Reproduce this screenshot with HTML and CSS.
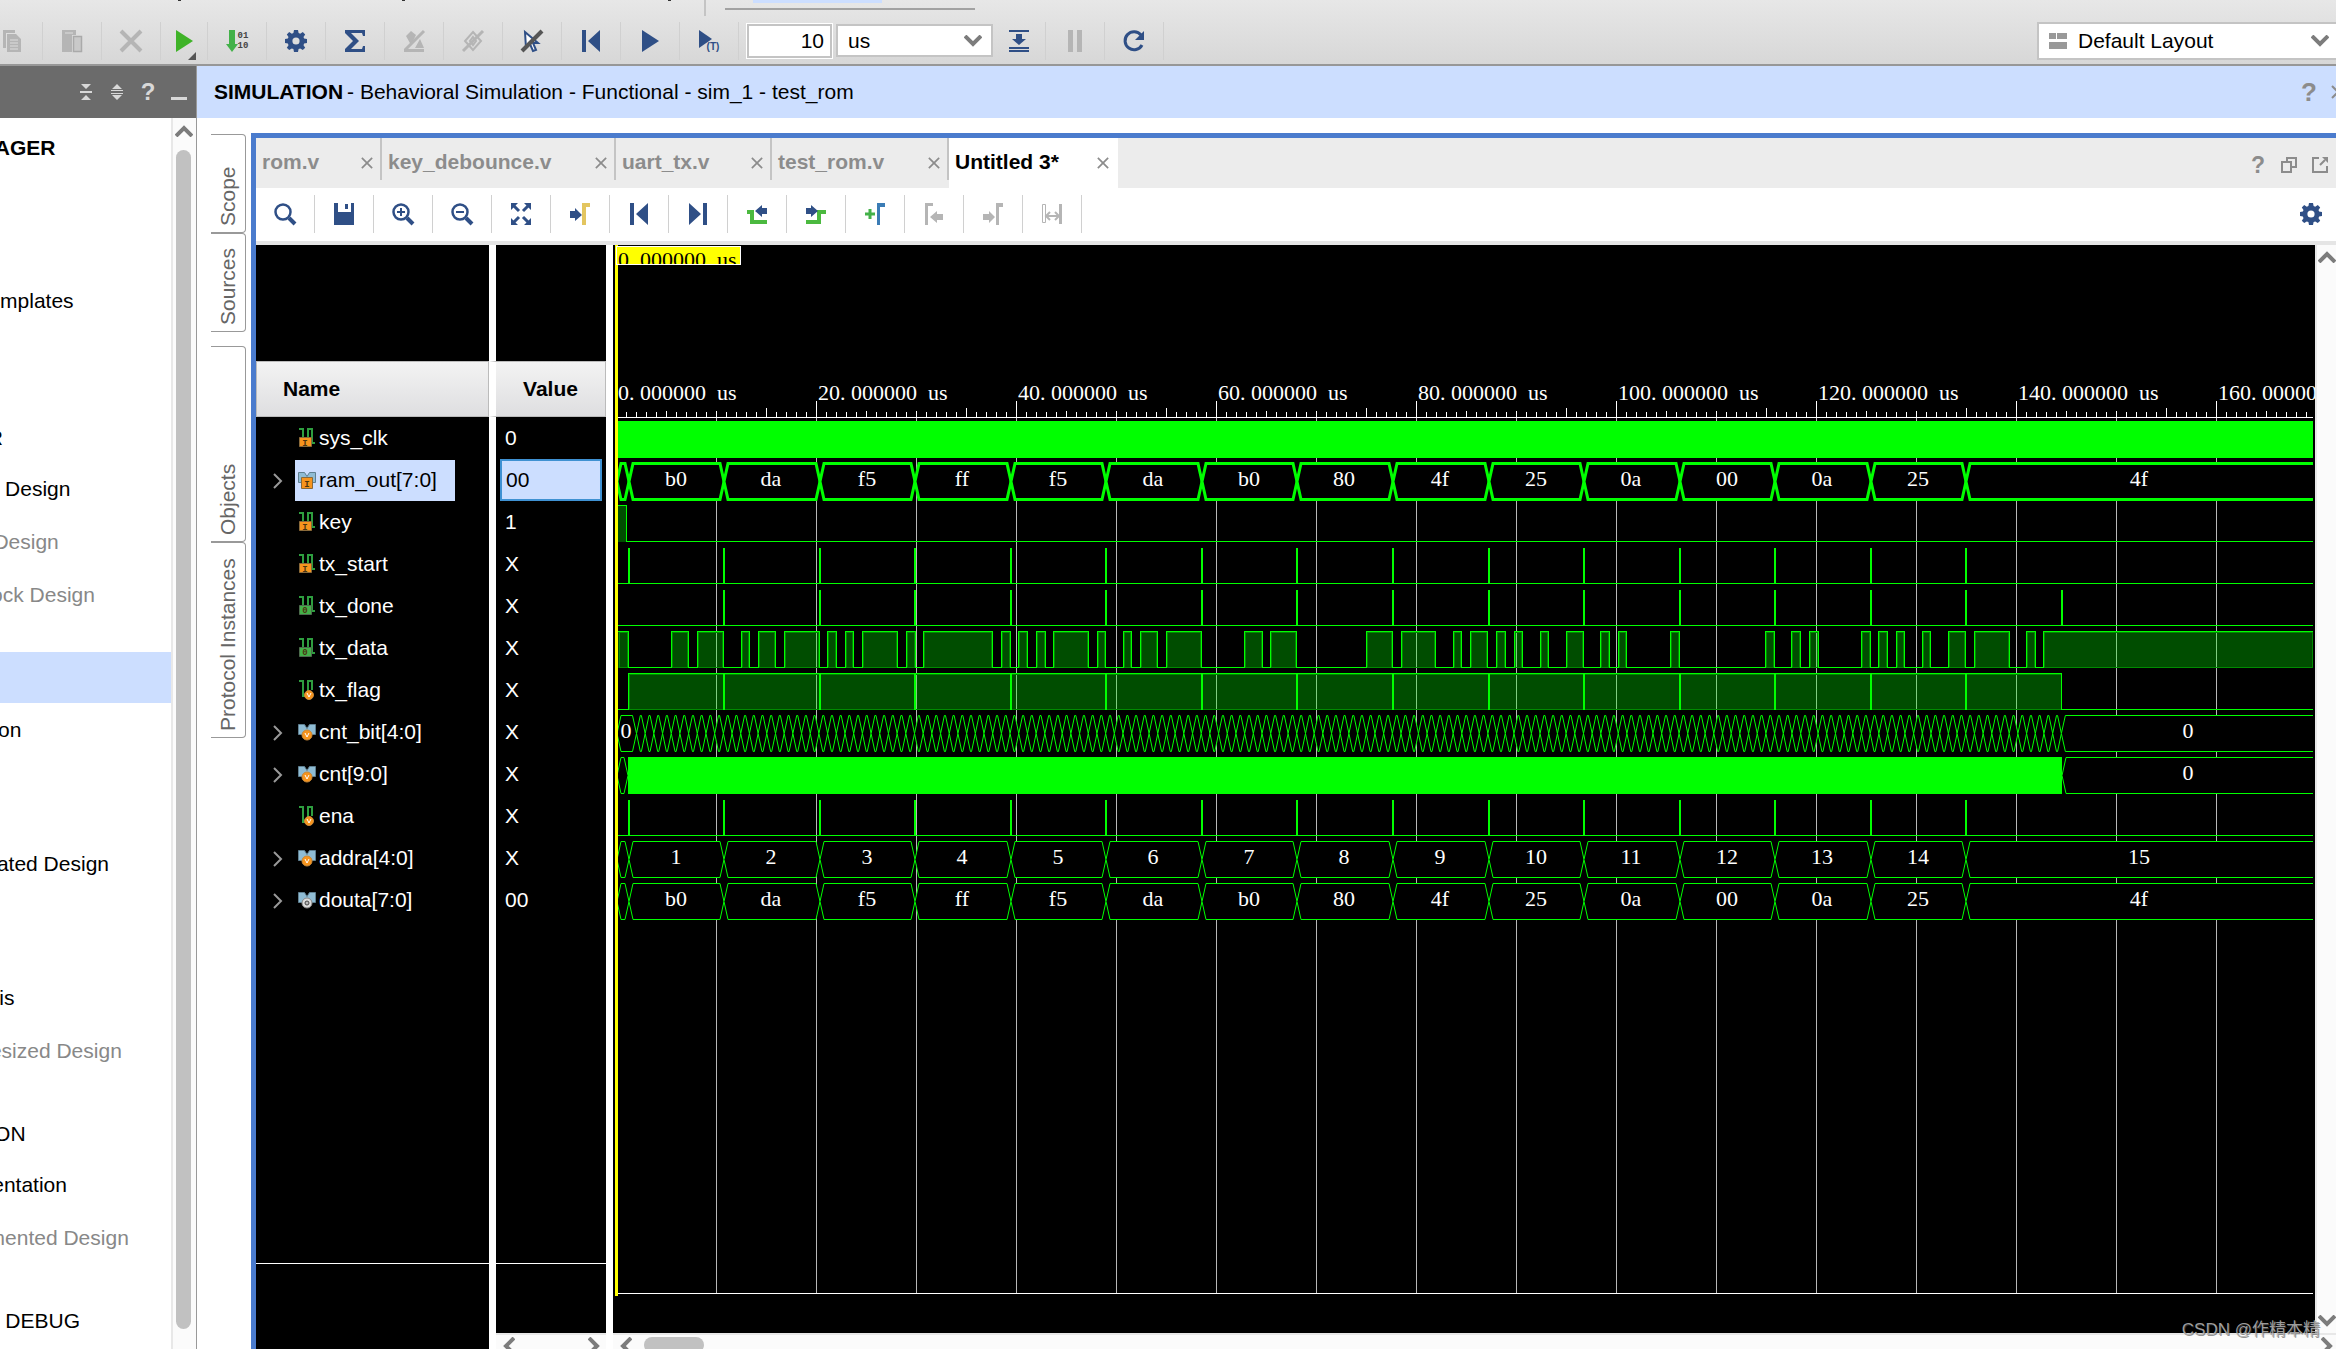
FILE: index.html
```html
<!DOCTYPE html>
<html lang="en">
<head>
<meta charset="utf-8">
<title>Behavioral Simulation - test_rom</title>
<link rel="stylesheet" href="styles.css">
</head>
<body>
<svg class="defs" aria-hidden="true">
  <symbol id="i-gear" viewBox="0 0 22 22"><path fill-rule="evenodd" fill="currentColor" d="M9 0h4l.6 3 1.6.7L17.8 2l2.4 2.4-1.7 2.5.6 1.6 2.9.5v4l-2.9.6-.6 1.600 1.700 2.500-2.400 2.400-2.600-1.700-1.600.6-.6 3H9l-.6-3-1.600-.6-2.600 1.700-2.400-2.400 1.700-2.500-.6-1.600L0 13V9l2.900-.5.6-1.600-1.700-2.500L4.200 2l2.600 1.700L8.400 3zM11 7.400a3.600 3.600 0 1 0 0 7.200 3.600 3.600 0 0 0 0-7.200z"/></symbol>
  <symbol id="i-prev" viewBox="0 0 22 22"><path fill="currentColor" d="M2 0h4v22H2zM20 0v22L8 11z"/></symbol>
  <symbol id="i-next" viewBox="0 0 22 22"><path fill="currentColor" d="M16 0h4v22h-4zM2 0v22l12-11z"/></symbol>
  <symbol id="i-play" viewBox="0 0 22 22"><path fill="currentColor" d="M3 0l17 11L3 22z"/></symbol>
  <symbol id="i-x" viewBox="0 0 14 14"><path fill="none" stroke="currentColor" stroke-width="2" d="M1 1l12 12M13 1L1 13"/></symbol>
  <symbol id="i-up" viewBox="0 0 18 12"><path fill="none" stroke="currentColor" stroke-width="4" d="M1 11l8-8 8 8"/></symbol>
  <symbol id="i-down" viewBox="0 0 18 12"><path fill="none" stroke="currentColor" stroke-width="4" d="M1 1l8 8 8-8"/></symbol>
  <symbol id="i-left" viewBox="0 0 12 18"><path fill="none" stroke="currentColor" stroke-width="4" d="M11 1L3 9l8 8"/></symbol>
  <symbol id="i-right" viewBox="0 0 12 18"><path fill="none" stroke="currentColor" stroke-width="4" d="M1 1l8 8-8 8"/></symbol>
  <symbol id="i-more" viewBox="0 0 10 16"><path fill="none" stroke="currentColor" stroke-width="2" d="M1 1l7 7-7 7"/></symbol>
  <symbol id="s-in" viewBox="0 0 18 20"><path fill="none" stroke="#2e9e3f" stroke-width="2" d="M1 1h4v9M10 9V1h4v14h3"/><path fill="#f7941d" stroke="#8a6a3a" d="M1.500 9.500h12v9h-12z"/><text x="7" y="18" class="badge">I</text></symbol>
  <symbol id="s-out" viewBox="0 0 18 20"><path fill="none" stroke="#2e9e3f" stroke-width="2" d="M1 1h4v9M10 9V1h4v14h3"/><path fill="#43b149" stroke="#4c6b4c" d="M1.500 9.500h12v9h-12z"/><text x="7" y="17" class="badge">0</text></symbol>
  <symbol id="s-var" viewBox="0 0 18 20"><path fill="none" stroke="#2e9e3f" stroke-width="2" d="M1 1h4v15h5V1h4v9"/><circle cx="11" cy="15" r="4.500" fill="#f7941d" stroke="#c98a3a"/><path fill="none" stroke="#fff" d="M9 13l2 4 2-4"/></symbol>
  <symbol id="s-bus-in" viewBox="0 0 18 20"><path fill="#8fbcd4" stroke="#5f7f90" d="M.5 2.500h6l2.500 4 2.500-4h6v10H14l-2-3H6l-2 3H.5z"/><path fill="#f7941d" stroke="#8a6a3a" d="M3.500 7.500h11v11h-11z"/><text x="9" y="17" class="badge">I</text></symbol>
  <symbol id="s-bus" viewBox="0 0 18 20"><path fill="#8fbcd4" stroke="#5f7f90" d="M.5 2.500h6l2.500 4 2.500-4h6v10H14l-2-3H6l-2 3H.5z"/><circle cx="9" cy="13" r="5" fill="#f7941d" stroke="#c98a3a"/><path fill="none" stroke="#fff" d="M7 11l2 4 2-4"/></symbol>
  <symbol id="s-bus-net" viewBox="0 0 18 20"><path fill="#8fbcd4" stroke="#5f7f90" d="M.5 2.500h6l2.500 4 2.500-4h6v10H14l-2-3H6l-2 3H.5z"/><circle cx="9" cy="13" r="5" fill="#ddd" stroke="#888"/><circle cx="9" cy="13" r="2" fill="#bbb" stroke="#444"/></symbol>
</svg>

<header class="top">
  <svg class="strip" aria-hidden="true"><g fill="#333"><rect x="178" width="3" height="1"/><rect x="402" width="3" height="1"/><rect x="668" width="3" height="1"/></g><rect x="704" width="2" height="16" fill="#c4c4c4"/><rect x="753" width="129" height="3" fill="#ccdeff"/><rect x="725" y="8" width="250" height="2" fill="#a2a2a2"/></svg>
  <div class="toolbar">
    <button class="tool first off" aria-label="Copy"><svg viewBox="0 0 26 22"><path fill="currentColor" d="M3 0h12v3H6v15H3zM7 4h9l5 5v13H7z"/><path stroke="#ddd" stroke-width="1" d="M10 10h8M10 13h8M10 16h8M10 19h8"/></svg></button>
    <button class="tool off" aria-label="Paste"><svg viewBox="0 0 22 22"><path fill="currentColor" d="M1 0h14v5h-4v17H1z"/><path stroke="#ddd" d="M4 3h8"/><path fill="#c9c9c9" stroke="#aaa" stroke-width="1.500" d="M12.500 6.500h8v15h-8z"/></svg></button>
    <button class="tool off" aria-label="Delete"><svg viewBox="0 0 22 22"><path fill="none" stroke="currentColor" stroke-width="4" d="M1 1l20 20M21 1L1 21"/></svg></button>
    <button class="tool run" aria-label="Run"><svg viewBox="0 0 22 22"><use href="#i-play"/></svg><i class="corner"></i></button>
    <button class="tool" aria-label="Program"><svg viewBox="0 0 22 22"><path fill="#43b149" d="M3 0h6v14h3L6 22 0 14h3z"/><text x="17" y="8" class="bits">01</text><text x="17" y="18" class="bits">10</text></svg></button>
    <button class="tool" aria-label="Settings"><svg viewBox="0 0 22 22"><use href="#i-gear"/></svg></button>
    <button class="tool" aria-label="Report"><svg viewBox="0 0 22 22"><path fill="currentColor" d="M1 0h20v6h-2l-1-3H7l8 8-8 8h11l1-3h2v6H1v-3l8-8-8-8z"/></svg></button>
    <button class="tool off" aria-label="Breakpoints"><svg viewBox="0 0 22 22"><path fill="currentColor" d="M3 6l5-5 5 4-5 10zM1 19h20v3H1zM12 18l5-9 4 9z"/><path stroke="currentColor" stroke-width="3" d="M21 1L2 20"/></svg></button>
    <button class="tool off" aria-label="Scope off"><svg viewBox="0 0 22 22"><path fill="none" stroke="currentColor" stroke-width="2" d="M11 2l8 9-8 9-8-9zM11 7l3 4-3 4-3-4z"/><path stroke="currentColor" stroke-width="3" d="M21 1L1 21"/></svg></button>
    <button class="tool" aria-label="Unselect"><svg viewBox="0 0 22 22"><path fill="#fff" stroke="currentColor" stroke-width="2" d="M4 2l13 11h-5l3 7-3 1-3-7-4 4z"/><path stroke="#555" stroke-width="4" d="M21 1L1 21"/></svg></button>
    <button class="tool" aria-label="Restart"><svg viewBox="0 0 22 22"><use href="#i-prev"/></svg></button>
    <button class="tool" aria-label="Run all"><svg viewBox="0 0 22 22"><use href="#i-play"/></svg></button>
    <button class="tool" aria-label="Run for time"><svg viewBox="0 0 22 22"><path fill="currentColor" d="M1 0l13 9L1 18z"/><text x="15" y="20" class="tee">(T)</text></svg></button>
    <input class="time" aria-label="Run time" value="10">
    <span class="pick unit"><select aria-label="Time unit"><option>us</option></select><svg viewBox="0 0 18 12"><use href="#i-down"/></svg></span>
    <button class="tool step" aria-label="Step"><svg viewBox="0 0 22 22"><path fill="currentColor" d="M1 0h20v2H1zM8 4h6v5h4l-7 6-7-6h4zM1 17h20v2H1zM1 20h20v2H1z"/></svg></button>
    <button class="tool off" aria-label="Pause"><svg viewBox="0 0 22 22"><path fill="currentColor" d="M4 0h5v22H4zM13 0h5v22h-5z"/></svg></button>
    <button class="tool" aria-label="Relaunch"><svg viewBox="0 0 22 22"><path fill="none" stroke="currentColor" stroke-width="3" d="M18 5a9 9 0 1 0 1 10"/><path fill="currentColor" d="M21 1v9h-9z"/></svg></button>
    <span class="pick layout"><svg class="grid-icon" viewBox="0 0 18 16"><path fill="#999" d="M0 0h7v6H0zM8 0h10v6H8zM0 9h18v7H0z"/></svg><select aria-label="Layout"><option>Default Layout</option></select><svg viewBox="0 0 18 12"><use href="#i-down"/></svg></span>
  </div>
</header>

<div class="work">
  <aside class="nav">
    <div class="nav-head">
      <button aria-label="Collapse all"><svg viewBox="0 0 16 16"><path fill="currentColor" d="M3 0h10L8 5zM2 7h12v2H2zM3 16h10l-5-5z"/></svg></button>
      <button aria-label="Expand all"><svg viewBox="0 0 16 16"><path fill="currentColor" d="M3 5h10L8 0zM2 6h12v1H2zM2 9h12v1H2zM3 11h10l-5 5z"/></svg></button>
      <button aria-label="Help">?</button>
      <button aria-label="Minimize"><svg viewBox="0 0 16 16"><path fill="currentColor" d="M0 13h16v3H0z"/></svg></button>
    </div>
    <div class="nav-body">
      <ul class="flow">
        <li class="group title">PROJECT MANAGER</li>
        <li class="after-hidden">Language Templates</li>
        <li class="group wide">IP INTEGRATOR</li>
        <li>Create Block Design</li>
        <li class="off">Open Block Design</li>
        <li class="off">Generate Block Design</li>
        <li class="group chosen">SIMULATION</li>
        <li>Run Simulation</li>
        <li class="after-head">Open Elaborated Design</li>
        <li class="after-head">Run Synthesis</li>
        <li class="off">Open Synthesized Design</li>
        <li class="group next">IMPLEMENTATION</li>
        <li>Run Implementation</li>
        <li class="off">Open Implemented Design</li>
        <li class="group next">PROGRAM AND DEBUG</li>
      </ul>
      <div class="vbar"><svg viewBox="0 0 18 12"><use href="#i-up"/></svg><i class="thumb"></i></div>
    </div>
  </aside>

  <main class="sim">
    <div class="sim-head"><h1>SIMULATION</h1><p>- Behavioral Simulation - Functional - sim_1 - test_rom</p>
      <button class="ask" aria-label="Help">?</button><button class="shut" aria-label="Close"><svg viewBox="0 0 14 14"><use href="#i-x"/></svg></button></div>
    <div class="sim-body">
      <nav class="side">
        <a href="#scope" class="short">Scope</a><a href="#sources" class="short">Sources</a>
        <a href="#objects" class="tall apart">Objects</a><a href="#protocol" class="tall">Protocol Instances</a>
      </nav>
      <section class="pane">
        <div class="tabs">
          <div class="tab t1"><a href="#rom">rom.v</a><button aria-label="Close rom.v"><svg viewBox="0 0 14 14"><use href="#i-x"/></svg></button></div>
          <div class="tab t2"><a href="#key">key_debounce.v</a><button aria-label="Close key_debounce.v"><svg viewBox="0 0 14 14"><use href="#i-x"/></svg></button></div>
          <div class="tab t3"><a href="#uart">uart_tx.v</a><button aria-label="Close uart_tx.v"><svg viewBox="0 0 14 14"><use href="#i-x"/></svg></button></div>
          <div class="tab t4"><a href="#test">test_rom.v</a><button aria-label="Close test_rom.v"><svg viewBox="0 0 14 14"><use href="#i-x"/></svg></button></div>
          <div class="tab t5 active"><a href="#wave">Untitled 3*</a><button aria-label="Close Untitled 3"><svg viewBox="0 0 14 14"><use href="#i-x"/></svg></button></div>
          <div class="tab-tools">
            <button aria-label="Help">?</button>
            <button aria-label="Restore"><svg viewBox="0 0 16 16"><path fill="none" stroke="currentColor" stroke-width="2" d="M1 5h9v10H1zM6 5V1h9v9h-5"/></svg></button>
            <button aria-label="Float"><svg viewBox="0 0 16 16"><path fill="none" stroke="currentColor" stroke-width="2" d="M7 1H1v14h14V9M8 8l5-5"/><path fill="currentColor" d="M10 0h6v6z"/></svg></button>
          </div>
        </div>
        <div class="wave-tools">
          <button class="tool" aria-label="Search"><svg viewBox="0 0 22 22"><circle cx="9" cy="9" r="7.500" fill="none" stroke="currentColor" stroke-width="2.500"/><path stroke="currentColor" stroke-width="4" d="M15 15l6 6"/></svg></button>
          <button class="tool" aria-label="Save"><svg viewBox="0 0 22 22"><path fill="currentColor" fill-rule="evenodd" d="M1 0h4v9h13V0h3v22H1zM12 1h3v5h-3z"/></svg></button>
          <button class="tool" aria-label="Zoom in"><svg viewBox="0 0 22 22"><circle cx="9" cy="9" r="7.500" fill="none" stroke="currentColor" stroke-width="2.500"/><path stroke="currentColor" stroke-width="4" d="M15 15l6 6"/><path stroke="currentColor" stroke-width="2" d="M5 9h8M9 5v8"/></svg></button>
          <button class="tool" aria-label="Zoom out"><svg viewBox="0 0 22 22"><circle cx="9" cy="9" r="7.500" fill="none" stroke="currentColor" stroke-width="2.500"/><path stroke="currentColor" stroke-width="4" d="M15 15l6 6"/><path stroke="currentColor" stroke-width="2" d="M5 9h8"/></svg></button>
          <button class="tool" aria-label="Zoom fit"><svg viewBox="0 0 22 22"><path fill="currentColor" d="M1 0h7L1 7zM14 0h7v7zM1 15v7h7zM21 15v7h-7z"/><path stroke="currentColor" stroke-width="3" d="M3 2l6 6M19 2l-6 6M3 20l6-6M19 20l-6-6"/></svg></button>
          <button class="tool" aria-label="Go to cursor"><svg viewBox="0 0 22 22"><path fill="currentColor" d="M1 8h5V5l7 7-7 6v-3H1z"/><path fill="#e3c55f" d="M13 0h8v4h-4v18h-4z"/></svg></button>
          <button class="tool" aria-label="Go to start"><svg viewBox="0 0 22 22"><use href="#i-prev"/></svg></button>
          <button class="tool" aria-label="Go to end"><svg viewBox="0 0 22 22"><use href="#i-next"/></svg></button>
          <button class="tool" aria-label="Previous transition"><svg viewBox="0 0 22 22"><path fill="none" stroke="#4bb93f" stroke-width="4" d="M1 9h5v10h15"/><path fill="currentColor" d="M9 8l7-6v3h5v6h-5v3z"/></svg></button>
          <button class="tool" aria-label="Next transition"><svg viewBox="0 0 22 22"><path fill="none" stroke="#4bb93f" stroke-width="4" d="M1 19h13V9h7"/><path fill="currentColor" d="M13 8L6 2v3H1v6h5v3z"/></svg></button>
          <button class="tool" aria-label="Add marker"><svg viewBox="0 0 22 22"><path stroke="#43b149" stroke-width="3" d="M1 11h10M6 6v10"/><path fill="#3b7cb5" d="M13 0h8v4h-5v18h-3z"/></svg></button>
          <button class="tool off" aria-label="Previous marker"><svg viewBox="0 0 22 22"><path fill="currentColor" d="M2 0h8v3H5v19H2zM7 14l7-6v3h6v6h-6v3z"/></svg></button>
          <button class="tool off" aria-label="Next marker"><svg viewBox="0 0 22 22"><path fill="currentColor" d="M14 0h7v4h-4v18h-3zM13 14L7 8v3H1v6h6v3z"/></svg></button>
          <button class="tool off" aria-label="Swap cursors"><svg viewBox="0 0 22 22"><path fill="none" stroke="currentColor" d="M1.500 1.500h3v18h-3z"/><path fill="none" stroke="currentColor" stroke-width="2" d="M6 13h11M9 9l-4 4 4 4M14 9l4 4-4 4"/><path fill="currentColor" d="M18 1h3v20h-3z"/></svg></button>
          <button class="gear" aria-label="Wave settings"><svg viewBox="0 0 22 22"><use href="#i-gear"/></svg></button>
        </div>
        <div class="viewer">
          <div class="signals">
            <table>
              <thead><tr><th>Name</th><th>Value</th></tr></thead>
              <tbody>
                <tr><td><span class="sig"><svg class="kind"><use href="#s-in"/></svg>sys_clk</span></td><td>0</td></tr>
                <tr class="picked"><td><svg class="open"><use href="#i-more"/></svg><span class="sig"><svg class="kind"><use href="#s-bus-in"/></svg>ram_out[7:0]</span></td><td><span class="cell">00</span></td></tr>
                <tr><td><span class="sig"><svg class="kind"><use href="#s-in"/></svg>key</span></td><td>1</td></tr>
                <tr><td><span class="sig"><svg class="kind"><use href="#s-in"/></svg>tx_start</span></td><td>X</td></tr>
                <tr><td><span class="sig"><svg class="kind"><use href="#s-out"/></svg>tx_done</span></td><td>X</td></tr>
                <tr><td><span class="sig"><svg class="kind"><use href="#s-out"/></svg>tx_data</span></td><td>X</td></tr>
                <tr><td><span class="sig"><svg class="kind"><use href="#s-var"/></svg>tx_flag</span></td><td>X</td></tr>
                <tr><td><svg class="open"><use href="#i-more"/></svg><span class="sig"><svg class="kind"><use href="#s-bus"/></svg>cnt_bit[4:0]</span></td><td>X</td></tr>
                <tr><td><svg class="open"><use href="#i-more"/></svg><span class="sig"><svg class="kind"><use href="#s-bus"/></svg>cnt[9:0]</span></td><td>X</td></tr>
                <tr><td><span class="sig"><svg class="kind"><use href="#s-var"/></svg>ena</span></td><td>X</td></tr>
                <tr><td><svg class="open"><use href="#i-more"/></svg><span class="sig"><svg class="kind"><use href="#s-bus"/></svg>addra[4:0]</span></td><td>X</td></tr>
                <tr><td><svg class="open"><use href="#i-more"/></svg><span class="sig"><svg class="kind"><use href="#s-bus-net"/></svg>douta[7:0]</span></td><td>00</td></tr>
              </tbody>
            </table>
            <div class="rule"></div>
            <div class="hbar small"><svg viewBox="0 0 12 18"><use href="#i-left"/></svg><svg viewBox="0 0 12 18"><use href="#i-right"/></svg></div>
          </div>
          <div class="plot">
            <div class="canvas"><svg id="wave" role="img" aria-label="Waveform"></svg></div>
            <div class="hbar"><svg viewBox="0 0 12 18"><use href="#i-left"/></svg><i class="thumb"></i><svg class="end" viewBox="0 0 12 18"><use href="#i-right"/></svg></div>
          </div>
          <div class="vbar wide"><svg viewBox="0 0 18 12"><use href="#i-up"/></svg><svg class="low" viewBox="0 0 18 12"><use href="#i-down"/></svg></div>
        </div>
      </section>
    </div>
  </main>
</div>
<div class="mark">CSDN @作精本精</div>
<script src="wave.js"></script>
</body>
</html>
```

FILE: styles.css
```css
* { box-sizing: border-box; }
body {
  margin: 0;
  height: 100vh;
  display: flex;
  flex-direction: column;
  overflow: hidden;
  background: #fff;
  color: #000;
  font: 21px/24px "Liberation Sans", Arial, sans-serif;
}
button { border: 0; padding: 0; background: none; color: inherit; font: inherit; }
a { color: inherit; text-decoration: none; }
svg { display: block; flex: none; }
.defs { position: absolute; width: 0; height: 0; }
.badge { font: bold 9px "Liberation Mono", monospace; fill: #4a3510; text-anchor: middle; }
.bits { font: bold 9px "Liberation Mono", monospace; fill: #444; text-anchor: middle; }
.tee { font: bold 10px "Liberation Sans", Arial, sans-serif; fill: #2f4f86; text-anchor: middle; }

.top {
  flex: none;
  background: linear-gradient(#e7e7e7, #d7d7d7);
  border-bottom: 2px solid #979797;
}
.strip { width: 100%; height: 17px; }
.toolbar { display: flex; align-items: center; height: 47px; }
.tool {
  position: relative;
  flex: none;
  width: 59px;
  height: 38px;
  display: flex;
  align-items: center;
  justify-content: center;
  color: #2f4f86;
  border-right: 1px solid #d0d0d0;
}
.tool svg { width: 22px; height: 22px; overflow: visible; }
.tool.off { color: #b5b5b5; }
.tool.first { width: 43px; justify-content: flex-start; }
.tool.first svg { width: 26px; }
.tool.run { width: 47px; color: #3fb328; }
.tool.step { width: 53px; }
.corner {
  position: absolute;
  right: 11px;
  bottom: 0;
  border: 4px solid;
  border-color: transparent #555 #555 transparent;
}
.time {
  width: 85px;
  height: 34px;
  margin: 0 4px 0 8px;
  padding: 0 6px;
  border: 2px solid #c4c4c4;
  outline: 1px solid #fff;
  background: #fff;
  font: inherit;
  text-align: right;
}
.pick {
  display: flex;
  align-items: center;
  position: relative;
  flex: none;
  color: #7c7c7c;
  border: 2px solid #c4c4c4;
  background: #fff;
}
.pick select {
  appearance: none;
  width: 100%;
  height: 100%;
  border: 0;
  padding: 0 10px;
  background: none;
  color: #000;
  font: inherit;
}
.pick svg { position: absolute; right: 9px; width: 18px; height: 12px; }
.unit { width: 157px; height: 33px; }
.layout { width: 303px; height: 38px; margin: 0 -4px 0 auto; }
.layout select { padding-left: 39px; }
.layout .grid-icon { left: 10px; width: 18px; height: 16px; }

.work { flex: 1; min-height: 0; display: flex; }
.nav { flex: none; width: 197px; display: flex; flex-direction: column; border-right: 1px solid #999; }
.nav-head {
  flex: none;
  height: 52px;
  display: flex;
  align-items: center;
  justify-content: flex-end;
  gap: 15px;
  padding-right: 9px;
  background: #6b6b6b;
  color: #d8d8d8;
}
.nav-head button { width: 16px; font-size: 24px; font-weight: bold; }
.nav-body { flex: 1; min-height: 0; display: flex; overflow: hidden; }
.flow { flex: 1; min-width: 0; margin: 0; padding: 6px 0 0; list-style: none; overflow: hidden; white-space: nowrap; }
.flow li { height: 53px; line-height: 53px; text-indent: -121px; }
.flow .off { color: #888; }
.flow .group { height: 48px; line-height: 48px; text-indent: -158px; }
.flow .title { font-weight: bold; }
.flow .after-hidden { margin-top: 102px; }
.flow .wide { margin-top: 87px; }
.flow .chosen { height: 51px; margin-top: 31px; background: #ccdeff; }
.flow .after-head { margin-top: 81px; }
.flow .next { margin-top: 33px; }
.vbar {
  flex: none;
  width: 25px;
  display: flex;
  flex-direction: column;
  align-items: center;
  gap: 13px;
  padding: 7px 2px 20px 0;
  color: #7c7c7c;
  border-left: 2px solid #e8e8e8;
  background: #fbfbfb;
}
.vbar svg { width: 18px; height: 12px; }
.vbar .thumb { flex: 1; width: 15px; border-radius: 8px; background: #c1c1c1; }

.sim { flex: 1; min-width: 0; display: flex; flex-direction: column; }
.sim-head {
  flex: none;
  height: 52px;
  display: flex;
  align-items: center;
  gap: 4px;
  padding-left: 17px;
  overflow: hidden;
  background: #ccdeff;
}
.sim-head h1, .sim-head p { margin: 0; font-size: 21px; }
.ask { margin-left: auto; color: #8c8c8c; font-size: 26px; font-weight: bold; }
.shut { color: #8c8c8c; margin: 0 -9px 0 10px; }
.shut svg { width: 14px; height: 14px; }
.sim-body { flex: 1; min-height: 0; display: flex; padding-top: 15px; }
.side { flex: none; width: 54px; padding: 1px 5px 0 14px; }
.side a {
  display: flex;
  align-items: center;
  width: 35px;
  padding-top: 6px;
  color: #666;
  writing-mode: vertical-rl;
  transform: rotate(180deg);
  border: 1px solid #999;
  border-right: 0;
  border-radius: 4px 0 0 4px;
  white-space: nowrap;
}
.side .short { height: 99px; }
.side .tall { height: 196px; }
.side .apart { margin-top: 14px; }

.pane { flex: 1; min-width: 0; display: flex; flex-direction: column; border: 5px solid #4a7bcd; border-width: 5px 0 0 5px; }
.tabs { flex: none; display: flex; height: 50px; background: #ececec; color: #8c8c8c; }
.tab {
  display: flex;
  align-items: center;
  justify-content: space-between;
  padding: 0 9px 0 6px;
  font-weight: bold;
  background: linear-gradient(#c4c4c4, #c4c4c4) right top / 2px 42px no-repeat;
}
.tab a { padding-bottom: 2px; }
.tab button { display: flex; align-items: center; }
.tab svg { width: 12px; height: 12px; }
.t1 { width: 126px; }
.t2 { width: 234px; }
.t3 { width: 156px; }
.t4 { width: 177px; }
.t5 { width: 169px; }
.active { background: #fff; color: #000; }
.active button { color: #8c8c8c; }
.tab-tools { display: flex; align-items: center; gap: 15px; margin-left: auto; padding: 4px 8px 0 0; }
.tab-tools button { width: 16px; font-size: 23px; font-weight: bold; }
.tab-tools svg, .nav-head svg { width: 16px; height: 16px; }
.wave-tools { flex: none; display: flex; align-items: center; height: 57px; padding-bottom: 1px; border-bottom: 4px solid #e5e5e5; background: #fff; }
.gear { margin: 0 14px 0 auto; color: #2f4f86; }
.gear svg { width: 22px; height: 22px; }

.viewer { flex: 1; min-height: 0; display: flex; }
.signals {
  flex: none;
  width: 350px;
  display: flex;
  flex-direction: column;
  padding-top: 116px;
  color: #fff;
  background: linear-gradient(to right, #000 233px, #fff 233px, #fff 240px, #000 240px);
}
.signals table { width: 350px; table-layout: fixed; border-spacing: 0; }
.signals th {
  height: 56px;
  padding: 0 0 0 26px;
  text-align: left;
  color: #000;
  border: 1px solid #bbb;
  background: linear-gradient(#f3f3f3, #dedee0);
}
.signals th:first-child { width: 233px; }
.signals th:last-child { background-clip: padding-box; border-left: 7px solid #fff; padding: 0; text-align: center; }
.signals td { height: 42px; padding: 0 0 0 16px; }
.signals td:first-child { position: relative; padding: 0 0 0 39px; }
.sig { display: inline-flex; align-items: center; height: 41px; padding: 0 18px 0 3px; gap: 3px; }
.kind { width: 18px; height: 20px; }
.open { position: absolute; left: 17px; top: 14px; width: 10px; height: 16px; color: #999; }
.picked .sig, .picked .cell { background: #ccdeff; color: #000; }
.signals .picked td:last-child { padding: 0 4px 0 11px; }
.cell { display: flex; align-items: center; height: 42px; padding-left: 4px; border: 2px solid #3f91d2; }
.rule { flex: 1; margin-bottom: 69px; border-bottom: 1px solid #fff; background: linear-gradient(#fff, #fff) 233px 0 / 7px 100% no-repeat; }
.hbar {
  flex: none;
  height: 16px;
  display: flex;
  gap: 12px;
  padding: 2px 6px 0 7px;
  overflow: hidden;
  color: #7c7c7c;
  border-top: 2px solid #e8e8e8;
  background: #fbfbfb;
}
.hbar.small { margin-left: 240px; justify-content: space-between; }
.hbar svg { width: 12px; height: 18px; }
.hbar .thumb { width: 60px; height: 16px; border-radius: 8px; background: #c1c1c1; }
.hbar .end { margin: 0 -16px 0 auto; }
.plot { flex: 1; min-width: 0; display: flex; flex-direction: column; margin-left: 7px; }
.plot .hbar { position: relative; margin-right: -21px; }
.plot .hbar .end { margin-right: -3px; }
.canvas { flex: 1; min-height: 0; overflow: hidden; background: #000; }
.canvas svg { width: 100%; height: 100%; }
.canvas svg svg { width: 140px; height: 19px; }
.vbar.wide { width: 21px; justify-content: space-between; margin-bottom: 16px; padding: 6px 0; align-items: flex-end; }

.grid-line { stroke: #b8b8b8; }
.axis { stroke: #fff; fill: none; }
.trace { stroke: #0f0; fill: none; }
.pulse { stroke: #0f0; stroke-width: 2; }
.high { fill: rgba(0, 255, 0, 0.3); }
.edge { stroke: #008a00; fill: none; }
.solid { fill: #0f0; }
.bus { stroke: #0f0; fill: #000; }
.bus.bold { stroke-width: 3; }
.cursor { fill: #ff0; }
.tag { fill: #ff0; stroke: #fff; }
.canvas text { font: 22px "Liberation Serif", "Times New Roman", serif; fill: #fff; }
.canvas .mid { text-anchor: middle; }
.canvas .dark { fill: #000; }

.mark {
  position: absolute;
  right: 16px;
  bottom: 7px;
  color: rgba(175, 175, 175, 0.9);
  font: 17px/24px "Liberation Sans", "Noto Sans CJK SC", sans-serif;
  text-shadow: 1px 1px 0 rgba(80, 80, 80, 0.6);
}
```

FILE: wave.js
```js
const svg = document.getElementById("wave");
const NS = "http://www.w3.org/2000/svg";

// Edges of the serial line while it is high, in pixels from the canvas edge.
const DATA_HIGH = [
  [5, 15], [58, 75], [84, 110], [128, 136], [145, 162], [171, 206], [214, 223], [232, 240],
  [249, 284], [293, 302], [310, 379], [388, 397], [405, 414], [423, 432], [440, 475], [484, 492],
  [510, 518], [527, 544], [553, 588], [631, 649], [657, 683], [753, 779], [788, 822], [840, 848],
  [857, 874], [883, 892], [901, 909], [927, 935], [953, 970], [987, 996], [1005, 1013], [1057, 1066],
  [1152, 1161], [1178, 1187], [1196, 1205], [1248, 1257], [1265, 1274], [1283, 1291], [1309, 1317],
  [1335, 1352], [1361, 1396], [1413, 1422], [1430, Infinity]
];
const BYTES = ["b0", "da", "f5", "ff", "f5", "da", "b0", "80", "4f", "25", "0a", "00", "0a", "25", "4f"];
const LEFT = 5;
const FRAME = 95.57;
const ROW = 42;
const GLYPH = 11;
const frameX = k => Math.round(15.5 + FRAME * k);

function add(tag, cls, attrs, text) {
  const el = document.createElementNS(NS, tag);
  el.setAttribute("class", cls);
  for (const name in attrs) el.setAttribute(name, attrs[name]);
  if (text !== undefined) el.textContent = text;
  svg.appendChild(el);
  return el;
}
const path = (cls, d) => add("path", cls, { d, "shape-rendering": "crispEdges" });
const rect = (cls, x, y, width, height) => add("rect", cls, { x, y, width, height, "shape-rendering": "crispEdges" });

// A time stamp whose whole part, fraction and unit each start on the character grid.
function stamp(whole, x) {
  const n = String(whole).length + 1;
  return `<tspan x="${x}">${whole}.</tspan><tspan x="${x + n * GLYPH}">000000 </tspan><tspan x="${x + (n + 7) * GLYPH}">us</tspan>`;
}

// One value of a bus: a hexagon, left open where it runs past the window.
function cell(cls, x1, x2, y, h, slope, open) {
  const m = y + h / 2;
  const right = open ? `H${x2}V${y + h}` : `H${x2 - slope}L${x2} ${m}L${x2 - slope} ${y + h}`;
  add("path", cls, { d: `M${x1} ${m}L${x1 + slope} ${y}${right}H${x1 + slope}Z` });
}

function draw() {
  svg.textContent = "";
  const W = svg.clientWidth, H = svg.clientHeight;
  const end = W - 2, floor = H - 39.5;

  for (let x = 103.5; x < end; x += 100) path("grid-line", `M${x} 173V${floor}`);
  for (let i = 1, x = 13.5; x < end; i++, x += 10) {
    const n = i % 20;
    const tall = n === 0 ? 16 : n === 15 ? 9 : n % 5 === 0 ? 6 : 5;
    path("axis", `M${x} 172V${172 - tall}`);
  }
  path("axis", `M${LEFT} 172.5H${end}M${LEFT} ${floor}H${end}`);
  for (let i = 0; 3 + i * 200 < end; i++)
    add("text", "time-label", { y: 155 }).innerHTML = stamp(i * 20, 5 + i * 200);

  const top = i => 176.5 + ROW * i;
  rect("solid", LEFT, 176, end - LEFT, 37);

  function bus(row, labels, bold) {
    const y = top(row);
    const cls = bold ? "bus bold" : "bus";
    cell(cls, LEFT - 1, frameX(0), y, 36, 4);
    labels.forEach((label, k) => {
      const last = k === labels.length - 1;
      const x1 = frameX(k), x2 = last ? end + 3 : frameX(k + 1);
      cell(cls, x1, x2, y, 36, 4, last);
      add("text", "mid", { x: Math.round((x1 + Math.min(x2, end)) / 2) - 1, y: y + 22 }, label);
    });
  }
  bus(1, BYTES, true);

  rect("high", LEFT, top(2), 8, 36);
  path("trace", `M${LEFT} ${top(2)}H13.5V${top(2) + 36}H${end}`);

  function pulses(row, from, to) {
    const y = top(row);
    path("trace", `M${LEFT} ${y + 36}H${end}`);
    for (let k = from; k <= to; k++) path("pulse", `M${frameX(k)} ${y}V${y + 36}`);
  }
  pulses(3, 0, 14);
  pulses(4, 1, 15);

  const y5 = top(5);
  let line = `M${LEFT} ${y5}`;
  DATA_HIGH.forEach(([a, b]) => {
    const stop = Math.min(b, end);
    rect("high", a, y5, stop - a, 36);
    path("edge", `M${a + 1.5} ${y5 + 36}V${y5 + 1}H${stop - 0.5}V${y5 + 36}Z`);
    line += `H${a + 0.5}V${y5}H${stop + 0.5}`;
    if (b < end) line += `V${y5 + 36}`;
  });
  path("trace", line);

  const y6 = top(6), last = frameX(15);
  rect("high", 15, y6, last - 15, 36);
  path("edge", `M16 ${y6 + 36}H${last - 1}V${y6 + 1}H16Z`);
  path("trace", `M${LEFT} ${y6 + 36}H15.5V${y6}H${last - 0.5}V${y6 + 36}H${end}`);
  for (let k = 1; k < 15; k++) path("pulse", `M${frameX(k)} ${y6}V${y6 + 36}`);

  const y7 = top(7), step = FRAME / 11;
  cell("bus", LEFT - 1, 23.5, y7, 36, 4);
  let x = 23.5;
  for (; x + step < last + 3; x += step) cell("bus", x, x + step, y7, 36, 3.8);
  cell("bus", x, end + 3, y7, 36, 4, true);

  const y8 = top(8);
  cell("bus", LEFT - 1, 15, y8, 36, 4);
  cell("bus", last, end + 3, y8, 36, 4, true);
  rect("solid", 15, y8 - 0.5, last - 15, 37);
  add("text", "mid", { x: 13, y: y7 + 22 }, "0");
  [y7, y8].forEach(y => add("text", "mid", { x: Math.round((last + end) / 2), y: y + 22 }, "0"));

  pulses(9, 0, 14);
  bus(10, BYTES.map((_, k) => k + 1));
  bus(11, BYTES);

  rect("mask", end, 173, 4, floor - 173);
  rect("cursor", 2, 0, 3, floor + 2);
  rect("tag", 3.5, 1.5, 124, 18);
  const clip = add("svg", "clip", { width: 140, height: 19 });
  clip.innerHTML = `<text class="dark" y="22">${stamp(0, 5)}</text>`;
}
draw();
addEventListener("resize", draw);
```
